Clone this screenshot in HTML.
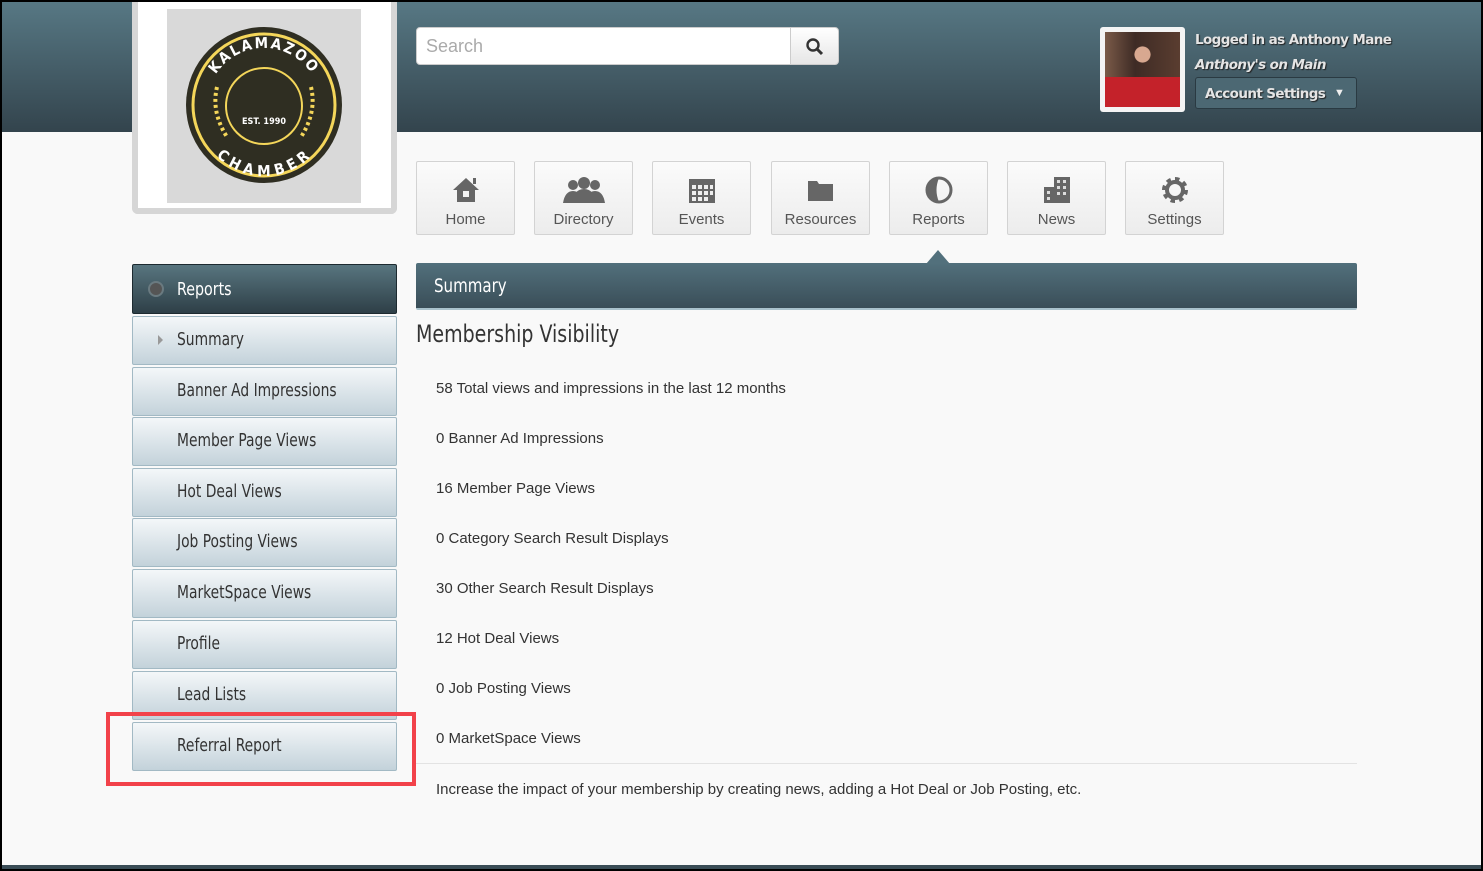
<!DOCTYPE html>
<html><head><meta charset="utf-8"><style>
*{box-sizing:border-box;margin:0;padding:0}
body{width:1483px;height:871px;overflow:hidden;background:#000;font-family:"Liberation Sans",sans-serif;}
#page{position:absolute;left:2px;top:2px;width:1479px;height:867px;background:#f9f9f9;overflow:hidden}
#hdr{position:absolute;left:0;top:0;width:1479px;height:130px;background:linear-gradient(#577884,#33444d)}
#foot{position:absolute;left:0;top:863px;width:1479px;height:6px;background:#3a4d57}
.logo{position:absolute;left:130px;top:0;width:265px;height:212px;background:#fff;border:6px solid #d6d6d6;border-top:none;border-radius:0 0 6px 6px}
.logo .g{position:absolute;left:29px;top:7px;width:194px;height:194px;background:#d9d9d9}
.search{position:absolute;left:414px;top:25px;width:375px;height:38px;background:#fff;border:1px solid #ccc;border-radius:4px 0 0 4px;font-size:18px;color:#aaa;padding:8px 9px}
.sbtn{position:absolute;left:788px;top:25px;width:49px;height:38px;background:linear-gradient(#fff,#e6e6e6);border:1px solid #ccc;border-radius:0 4px 4px 0}
.av{position:absolute;left:1098px;top:25px;width:85px;height:85px;background:#f4f4f4;border-radius:3px;padding:5px}
.av div{width:75px;height:75px;background:radial-gradient(circle at 50% 30%,#d8a890 0 12%,transparent 13%),linear-gradient(transparent 60%,#c4222a 60%),linear-gradient(90deg,#7a5a48,#3e2b25 40%,#5a3d30)}
.cond{font-family:"DejaVu Sans Condensed","DejaVu Sans",sans-serif}
.sx{display:inline-block;transform:scaleX(.88);transform-origin:left;white-space:nowrap}
.u{position:absolute;left:1193px;color:#e5e5e5;font-family:"DejaVu Sans",sans-serif;font-weight:bold;font-size:13.5px;letter-spacing:-.6px;text-shadow:1px 1px 1px #222;white-space:nowrap}
.acc{position:absolute;left:1193px;top:75px;width:162px;height:32px;background:#4c6873;border:1px solid #2a3a42;border-radius:3px;color:#fff;padding:7px 9px;white-space:nowrap}
.nav{position:absolute;top:159px;width:99px;height:74px;background:linear-gradient(#fbfbfb,#ececec);border:1px solid #d3d3d3;border-radius:2px;text-align:center;color:#555;font-size:15px}
.nav svg{display:block;margin:13px auto 6px}
.bar{position:absolute;left:414px;top:261px;width:941px;height:47px;background:linear-gradient(#52707c,#3a4e58);border-bottom:2px solid #a9c2cc;border-radius:2px;color:#fff;font-size:19px;padding:12px 18px}
.tri{position:absolute;left:924px;top:248px;width:0;height:0;border-left:12px solid transparent;border-right:12px solid transparent;border-bottom:14px solid #52707c}
h1{position:absolute;left:414px;top:318px;font-weight:normal;font-size:24px;color:#333}
.st{position:absolute;left:434px;font-size:15px;color:#333}
.side{position:absolute;left:130px;width:265px;height:49px;background:linear-gradient(#f4f7f9,#c3d2da);border:1px solid #a2b9c4;border-radius:2px;color:#333;font-size:17.5px;padding:13px 0 0 44px}
.rep{position:absolute;left:130px;top:262px;width:265px;height:50px;background:linear-gradient(#58757f,#2e3f47);border:1px solid #1d2a30;border-radius:2px;color:#fff;font-size:18px;padding:14px 0 0 44px}
</style></head><body><div id="page">
<div id="hdr"></div>
<div class="logo"><div class="g">
<svg width="194" height="194" viewBox="0 0 194 194"><circle cx="97" cy="96" r="78" fill="#2f2e22"/><circle cx="97" cy="96" r="71" fill="none" stroke="#f4d65a" stroke-width="3"/><circle cx="97" cy="97" r="38" fill="none" stroke="#f4d65a" stroke-width="2"/>
<path id="ta" d="M40 96 A57 57 0 0 1 154 96" fill="none"/><path id="tb" d="M42 100 A55 55 0 0 0 152 100" fill="none"/>
<text font-family="DejaVu Sans Condensed" font-weight="bold" font-size="15" fill="#fff" letter-spacing="2"><textPath href="#ta" startOffset="50%" text-anchor="middle">KALAMAZOO</textPath></text>
<text font-family="DejaVu Sans Condensed" font-weight="bold" font-size="15" fill="#fff" letter-spacing="2" dy="12"><textPath href="#tb" startOffset="50%" text-anchor="middle">CHAMBER</textPath></text>
<text x="97" y="115" text-anchor="middle" font-family="DejaVu Sans Condensed" font-weight="bold" font-size="9" fill="#fff">EST. 1990</text>
<path d="M50 78 q-6 25 10 50 M144 78 q6 25 -10 50" stroke="#f4d65a" stroke-width="4" fill="none" stroke-dasharray="3 3"/></svg></div></div>
<div class="search">Search</div>
<div class="sbtn"><svg width="49" height="38" viewBox="0 0 49 38"><circle cx="22" cy="17" r="5.5" fill="none" stroke="#333" stroke-width="2.4"/><path d="M26 21l5 5" stroke="#333" stroke-width="3"/></svg></div>
<div class="av"><div></div></div>
<div class="u" style="top:30px">Logged in as Anthony Mane</div>
<div class="u" style="top:55px;font-style:italic">Anthony's on Main</div>
<div class="acc"><span class="u" style="position:static">Account Settings</span><span style="position:absolute;left:138px;top:9px;font-size:11px;color:#eee">▼</span></div>

<div class="nav" style="left:414px"><svg width="30" height="30" viewBox="0 0 30 30" fill="#666"><path d="M15 3L2 15h4v12h18V15h4z"/><rect x="22" y="3" width="3" height="6"/><rect x="12" y="16" width="6" height="6" fill="#f3f3f3"/></svg>Home</div>
<div class="nav" style="left:532px"><svg width="46" height="30" viewBox="0 0 46 30" fill="#666"><circle cx="12" cy="10" r="5"/><circle cx="34" cy="10" r="5"/><circle cx="23" cy="8" r="6"/><path d="M2 28q2-12 10-12t10 12zM24 28q2-12 10-12t10 12zM11 28q2-14 12-14t12 14z"/></svg>Directory</div>
<div class="nav" style="left:650px"><svg width="30" height="30" viewBox="0 0 30 30" fill="#666"><rect x="2" y="4" width="26" height="24"/><g fill="#eee"><rect x="5" y="10" width="4" height="4"/><rect x="11" y="10" width="4" height="4"/><rect x="17" y="10" width="4" height="4"/><rect x="23" y="10" width="3" height="4"/><rect x="5" y="16" width="4" height="4"/><rect x="11" y="16" width="4" height="4"/><rect x="17" y="16" width="4" height="4"/><rect x="23" y="16" width="3" height="4"/><rect x="5" y="22" width="4" height="4"/><rect x="11" y="22" width="4" height="4"/><rect x="17" y="22" width="4" height="4"/></g></svg>Events</div>
<div class="nav" style="left:769px"><svg width="30" height="30" viewBox="0 0 30 30" fill="#666"><path d="M2 6h9l2 3h14v17H2z"/></svg>Resources</div>
<div class="nav" style="left:887px"><svg width="30" height="30" viewBox="0 0 30 30"><circle cx="15" cy="15" r="12" fill="none" stroke="#666" stroke-width="3"/><path d="M15 3a12 12 0 0 0 0 24q-5-12 0-24z" fill="#666"/></svg>Reports</div>
<div class="nav" style="left:1005px"><svg width="30" height="30" viewBox="0 0 30 30" fill="#666"><rect x="12" y="2" width="16" height="26"/><rect x="2" y="12" width="10" height="16"/><g fill="#ddd"><rect x="15" y="5" width="3" height="3"/><rect x="21" y="5" width="3" height="3"/><rect x="15" y="11" width="3" height="3"/><rect x="21" y="11" width="3" height="3"/><rect x="15" y="17" width="3" height="3"/><rect x="21" y="17" width="3" height="3"/><rect x="5" y="16" width="3" height="3"/><rect x="5" y="22" width="3" height="3"/></g></svg>News</div>
<div class="nav" style="left:1123px"><svg width="30" height="30" viewBox="0 0 30 30"><circle cx="15" cy="15" r="10" fill="none" stroke="#666" stroke-width="6" stroke-dasharray="4 3.8"/><circle cx="15" cy="15" r="8" fill="none" stroke="#666" stroke-width="4"/></svg>Settings</div>

<div class="tri"></div>
<div class="bar cond"><span class="sx">Summary</span></div>
<h1 class="cond"><span class="sx">Membership Visibility</span></h1>
<div class="st" style="top:378px">58 Total views and impressions in the last 12 months</div>
<div class="st" style="top:428px">0 Banner Ad Impressions</div>
<div class="st" style="top:478px">16 Member Page Views</div>
<div class="st" style="top:528px">0 Category Search Result Displays</div>
<div class="st" style="top:578px">30 Other Search Result Displays</div>
<div class="st" style="top:628px">12 Hot Deal Views</div>
<div class="st" style="top:678px">0 Job Posting Views</div>
<div class="st" style="top:728px">0 MarketSpace Views</div>
<div style="position:absolute;left:414px;top:761px;width:941px;height:1px;background:#e3e3e3"></div>
<div class="st" style="top:779px">Increase the impact of your membership by creating news, adding a Hot Deal or Job Posting, etc.</div>

<div class="rep cond"><span style="position:absolute;left:15px;top:16px;width:16px;height:16px;border-radius:50%;background:#555;border:2px solid #6a7a80"></span><span class="sx">Reports</span></div>
<div class="side cond" style="top:314px"><span style="position:absolute;left:25px;top:18px;border-left:5px solid #999;border-top:5px solid transparent;border-bottom:5px solid transparent"></span><span class="sx">Summary</span></div>
<div class="side cond" style="top:365px"><span class="sx">Banner Ad Impressions</span></div>
<div class="side cond" style="top:415px"><span class="sx">Member Page Views</span></div>
<div class="side cond" style="top:466px"><span class="sx">Hot Deal Views</span></div>
<div class="side cond" style="top:516px"><span class="sx">Job Posting Views</span></div>
<div class="side cond" style="top:567px"><span class="sx">MarketSpace Views</span></div>
<div class="side cond" style="top:618px"><span class="sx">Profile</span></div>
<div class="side cond" style="top:669px"><span class="sx">Lead Lists</span></div>
<div class="side cond" style="top:720px"><span class="sx">Referral Report</span></div>
<div style="position:absolute;left:104px;top:710px;width:310px;height:74px;border:4px solid #f2424a"></div>
<div id="foot"></div>
</div></body></html>
